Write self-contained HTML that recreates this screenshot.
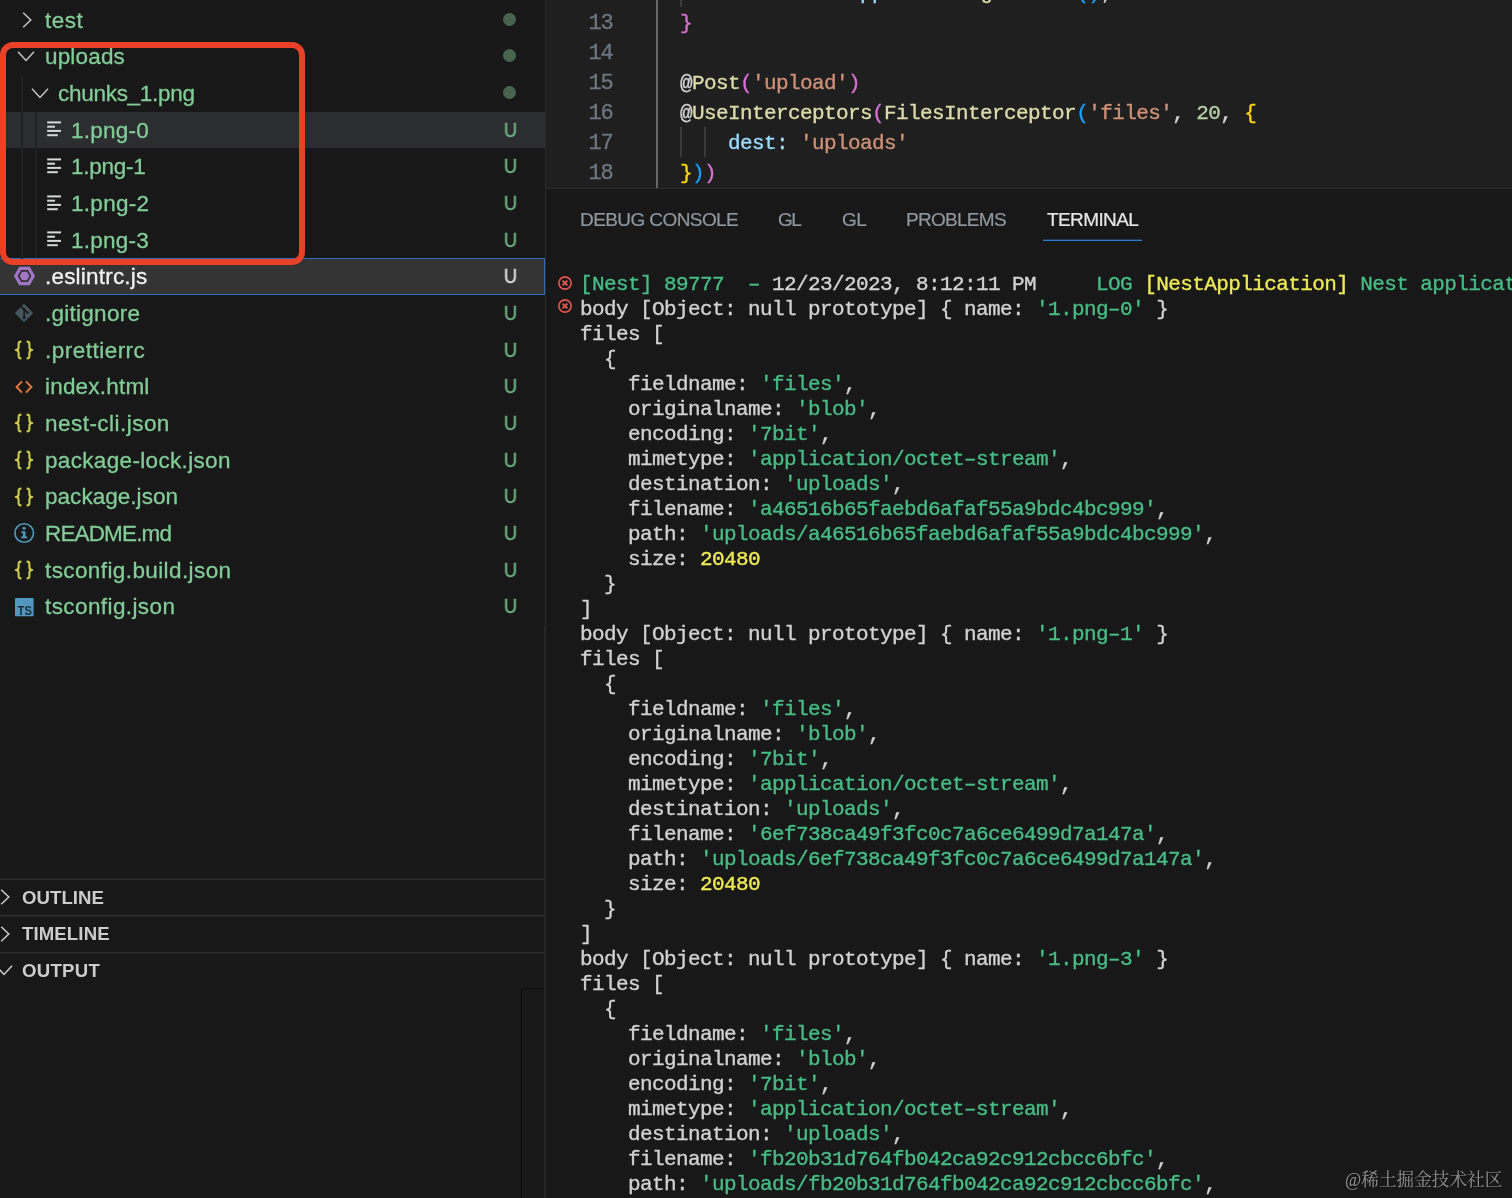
<!DOCTYPE html>
<html><head><meta charset="utf-8"><title>vscode</title>
<style>
html,body{margin:0;padding:0;background:#181818;}
body{width:1512px;height:1198px;position:relative;overflow:hidden;font-family:"Liberation Sans",sans-serif;}
.abs{position:absolute}
#sidebar{position:absolute;left:0;top:0;width:545px;height:1198px;background:#181818;overflow:hidden}
#sbborder{position:absolute;left:545px;top:0;width:1px;height:1198px;background:#2b2b2b}
.row{position:absolute;left:0;width:545px;height:36.667px}
.row.hov{background:#2b2d2f}
.row.sel{left:-4px;width:549px;background:#343434;box-shadow:inset 0 0 0 1px #2a6dc0}
.ic{position:absolute;overflow:visible}
.lbl{position:absolute;font-size:22.5px;line-height:36.667px;height:36.667px;white-space:pre;margin-top:1.0px;-webkit-text-stroke:0.3px currentColor;will-change:transform}
.ubadge{position:absolute;left:503.2px;width:15px;text-align:center;font-size:20px;line-height:36.667px;height:36.667px;margin-top:0.3px;-webkit-text-stroke:0.5px currentColor;transform:scaleX(.9)}
.dot{position:absolute;left:503.1px;width:13px;height:13px;border-radius:50%;background:#48644f}
.guide{position:absolute;width:2px;background:#212121}
#redbox{position:absolute;left:-0.5px;top:41.8px;width:293.2px;height:211px;border:6.2px solid #e84127;border-radius:13px}
.hline{position:absolute;left:0;width:545px;height:1px;background:#2d2d2d}
.hdr{position:absolute;font-weight:700;font-size:18.6px;color:#cccccc;line-height:22px;white-space:pre}
#outrect{position:absolute;left:521px;top:988px;width:24px;height:220px;border-left:1.2px solid #0b0b10;border-top:1.2px solid #0b0b10}
#editor{position:absolute;left:546px;top:0;width:966px;height:188px;background:#1f1f1f;overflow:hidden}
.ln,.cl,.tl{font-family:"Liberation Mono",monospace;white-space:pre;position:absolute;will-change:transform;-webkit-text-stroke:0.35px currentColor}
.tab,.hdr,.ubadge{will-change:transform}
.ln{left:0;width:66.4px;text-align:right;color:#6e7681;font-size:22px;letter-spacing:-1.2px;line-height:30px;height:30px;margin-top:2.0px}
.cl{left:110.2px;color:#d4d4d4;font-size:21px;letter-spacing:-0.6px;line-height:30px;height:30px;margin-top:1.9px}
.eg{position:absolute;width:2px}
#panel{position:absolute;left:546px;top:188px;width:966px;height:1010px;background:#181818;border-top:1.4px solid #2b2b2b;overflow:hidden}
.tab{position:absolute;top:208.9px;font-size:19px;line-height:22px;color:#8f979f;white-space:pre;-webkit-text-stroke:0.2px currentColor}
.tl{left:580px;color:#d2d2d2;font-size:21px;letter-spacing:-0.6px;line-height:25px;height:25px}
</style></head><body>
<div id="sidebar">
<div class="row" style="top:1.50px"></div>
<svg class="ic" style="left:18.6px;top:10.2335px" width="16" height="20" viewBox="0 0 16 20"><polyline points="4.2,2.8 11.8,10 4.2,17.2" fill="none" stroke="#c5c5c5" stroke-width="1.5"/></svg>
<span class="lbl" style="left:45.0px;top:1.50px;color:#82cc98;letter-spacing:0.5px">test</span>
<div class="dot" style="top:12.73px"></div>
<div class="row" style="top:38.17px"></div>
<svg class="ic" style="left:16.3px;top:48.3005px" width="20" height="16" viewBox="0 0 20 16"><polyline points="2,3.8 10,12.4 18,3.8" fill="none" stroke="#c5c5c5" stroke-width="1.5"/></svg>
<span class="lbl" style="left:44.6px;top:38.17px;color:#82cc98;letter-spacing:0.166px">uploads</span>
<div class="dot" style="top:49.40px"></div>
<div class="row" style="top:74.83px"></div>
<svg class="ic" style="left:29.6px;top:85.3675px" width="20" height="16" viewBox="0 0 20 16"><polyline points="2,3.8 10,12.4 18,3.8" fill="none" stroke="#c5c5c5" stroke-width="1.5"/></svg>
<span class="lbl" style="left:57.6px;top:74.83px;color:#82cc98;letter-spacing:-0.28px">chunks_1.png</span>
<div class="dot" style="top:86.07px"></div>
<div class="row hov" style="top:111.50px"></div>
<svg class="ic" style="left:47.2px;top:120.2345px" width="16" height="18" viewBox="0 0 16 18"><g stroke="#d6d9d8" stroke-width="2"><line x1="0.2" y1="2.4" x2="14" y2="2.4"/><line x1="0.2" y1="6.7" x2="8" y2="6.7"/><line x1="0.2" y1="10.9" x2="14" y2="10.9"/><line x1="0.2" y1="15.2" x2="10.8" y2="15.2"/></g></svg>
<span class="lbl" style="left:71.3px;top:111.50px;color:#82cc98;letter-spacing:0.25px">1.png-0</span>
<span class="ubadge" style="top:111.50px;color:#6db082">U</span>
<div class="row" style="top:148.17px"></div>
<svg class="ic" style="left:47.2px;top:156.90150000000003px" width="16" height="18" viewBox="0 0 16 18"><g stroke="#d6d9d8" stroke-width="2"><line x1="0.2" y1="2.4" x2="14" y2="2.4"/><line x1="0.2" y1="6.7" x2="8" y2="6.7"/><line x1="0.2" y1="10.9" x2="14" y2="10.9"/><line x1="0.2" y1="15.2" x2="10.8" y2="15.2"/></g></svg>
<span class="lbl" style="left:71.3px;top:148.17px;color:#82cc98;letter-spacing:-0.267px">1.png-1</span>
<span class="ubadge" style="top:148.17px;color:#6db082">U</span>
<div class="row" style="top:184.84px"></div>
<svg class="ic" style="left:47.2px;top:193.5685px" width="16" height="18" viewBox="0 0 16 18"><g stroke="#d6d9d8" stroke-width="2"><line x1="0.2" y1="2.4" x2="14" y2="2.4"/><line x1="0.2" y1="6.7" x2="8" y2="6.7"/><line x1="0.2" y1="10.9" x2="14" y2="10.9"/><line x1="0.2" y1="15.2" x2="10.8" y2="15.2"/></g></svg>
<span class="lbl" style="left:71.3px;top:184.84px;color:#82cc98;letter-spacing:0.285px">1.png-2</span>
<span class="ubadge" style="top:184.84px;color:#6db082">U</span>
<div class="row" style="top:221.50px"></div>
<svg class="ic" style="left:47.2px;top:230.23550000000003px" width="16" height="18" viewBox="0 0 16 18"><g stroke="#d6d9d8" stroke-width="2"><line x1="0.2" y1="2.4" x2="14" y2="2.4"/><line x1="0.2" y1="6.7" x2="8" y2="6.7"/><line x1="0.2" y1="10.9" x2="14" y2="10.9"/><line x1="0.2" y1="15.2" x2="10.8" y2="15.2"/></g></svg>
<span class="lbl" style="left:71.3px;top:221.50px;color:#82cc98;letter-spacing:0.25px">1.png-3</span>
<span class="ubadge" style="top:221.50px;color:#6db082">U</span>
<div class="row sel" style="top:258.17px"></div>
<svg class="ic" style="left:12px;top:264.0025px" width="25" height="24" viewBox="0 0 25 24"><polygon points="1.9,12 7.2,2.7 17.8,2.7 23.1,12 17.8,21.3 7.2,21.3" fill="#a276c6"/><polygon points="6.6,12 9.55,6.9 15.45,6.9 18.4,12 15.45,17.1 9.55,17.1" fill="none" stroke="#333333" stroke-width="1.8"/></svg>
<span class="lbl" style="left:44.9px;top:258.17px;color:#f2f2f2;letter-spacing:0.202px">.eslintrc.js</span>
<span class="ubadge" style="top:258.17px;color:#dddddd">U</span>
<div class="row" style="top:294.84px"></div>
<svg class="ic" style="left:13px;top:301.8695px" width="22" height="22" viewBox="0 0 22 22"><rect x="4.4" y="4.4" width="13.2" height="13.2" rx="1.2" transform="rotate(45 11 11)" fill="#44555f"/><g stroke="#181818" stroke-width="1.5" fill="none"><line x1="11.2" y1="6.5" x2="11.2" y2="15.5"/><line x1="8" y1="4.6" x2="14.3" y2="10.5"/></g><circle cx="11.2" cy="15.6" r="1.5" fill="#181818"/><circle cx="14.3" cy="10.7" r="1.4" fill="#181818"/><circle cx="11.2" cy="7.6" r="1.4" fill="#181818"/></svg>
<span class="lbl" style="left:44.9px;top:294.84px;color:#82cc98;letter-spacing:0.266px">.gitignore</span>
<span class="ubadge" style="top:294.84px;color:#6db082">U</span>
<div class="row" style="top:331.50px"></div>
<svg class="ic" style="left:13px;top:339.13650000000007px" width="22" height="22" viewBox="0 0 22 22"><g fill="none" stroke="#cfcd4c" stroke-width="2.1" stroke-linejoin="round" stroke-linecap="butt"><path d="M8.4,2.6 C5.6,2.6 5.6,3.6 5.6,6 L5.6,8.2 C5.6,10 4.6,11 2.8,11 C4.6,11 5.6,12 5.6,13.8 L5.6,16 C5.6,18.4 5.6,19.4 8.4,19.4"/><path d="M13.6,2.6 C16.4,2.6 16.4,3.6 16.4,6 L16.4,8.2 C16.4,10 17.4,11 19.2,11 C17.4,11 16.4,12 16.4,13.8 L16.4,16 C16.4,18.4 16.4,19.4 13.6,19.4"/></g></svg>
<span class="lbl" style="left:44.9px;top:331.50px;color:#82cc98;letter-spacing:0.48px">.prettierrc</span>
<span class="ubadge" style="top:331.50px;color:#6db082">U</span>
<div class="row" style="top:368.17px"></div>
<svg class="ic" style="left:13px;top:375.80350000000004px" width="22" height="22" viewBox="0 0 22 22"><g fill="none" stroke="#e07a3c" stroke-width="2"><polyline points="9,5.4 3.6,11 9,16.6"/><polyline points="13,5.4 18.4,11 13,16.6"/></g></svg>
<span class="lbl" style="left:44.9px;top:368.17px;color:#82cc98;letter-spacing:0.198px">index.html</span>
<span class="ubadge" style="top:368.17px;color:#6db082">U</span>
<div class="row" style="top:404.84px"></div>
<svg class="ic" style="left:13px;top:412.4705px" width="22" height="22" viewBox="0 0 22 22"><g fill="none" stroke="#cfcd4c" stroke-width="2.1" stroke-linejoin="round" stroke-linecap="butt"><path d="M8.4,2.6 C5.6,2.6 5.6,3.6 5.6,6 L5.6,8.2 C5.6,10 4.6,11 2.8,11 C4.6,11 5.6,12 5.6,13.8 L5.6,16 C5.6,18.4 5.6,19.4 8.4,19.4"/><path d="M13.6,2.6 C16.4,2.6 16.4,3.6 16.4,6 L16.4,8.2 C16.4,10 17.4,11 19.2,11 C17.4,11 16.4,12 16.4,13.8 L16.4,16 C16.4,18.4 16.4,19.4 13.6,19.4"/></g></svg>
<span class="lbl" style="left:44.9px;top:404.84px;color:#82cc98;letter-spacing:0.466px">nest-cli.json</span>
<span class="ubadge" style="top:404.84px;color:#6db082">U</span>
<div class="row" style="top:441.50px"></div>
<svg class="ic" style="left:13px;top:449.13750000000005px" width="22" height="22" viewBox="0 0 22 22"><g fill="none" stroke="#cfcd4c" stroke-width="2.1" stroke-linejoin="round" stroke-linecap="butt"><path d="M8.4,2.6 C5.6,2.6 5.6,3.6 5.6,6 L5.6,8.2 C5.6,10 4.6,11 2.8,11 C4.6,11 5.6,12 5.6,13.8 L5.6,16 C5.6,18.4 5.6,19.4 8.4,19.4"/><path d="M13.6,2.6 C16.4,2.6 16.4,3.6 16.4,6 L16.4,8.2 C16.4,10 17.4,11 19.2,11 C17.4,11 16.4,12 16.4,13.8 L16.4,16 C16.4,18.4 16.4,19.4 13.6,19.4"/></g></svg>
<span class="lbl" style="left:44.9px;top:441.50px;color:#82cc98;letter-spacing:0.332px">package-lock.json</span>
<span class="ubadge" style="top:441.50px;color:#6db082">U</span>
<div class="row" style="top:478.17px"></div>
<svg class="ic" style="left:13px;top:485.8045000000001px" width="22" height="22" viewBox="0 0 22 22"><g fill="none" stroke="#cfcd4c" stroke-width="2.1" stroke-linejoin="round" stroke-linecap="butt"><path d="M8.4,2.6 C5.6,2.6 5.6,3.6 5.6,6 L5.6,8.2 C5.6,10 4.6,11 2.8,11 C4.6,11 5.6,12 5.6,13.8 L5.6,16 C5.6,18.4 5.6,19.4 8.4,19.4"/><path d="M13.6,2.6 C16.4,2.6 16.4,3.6 16.4,6 L16.4,8.2 C16.4,10 17.4,11 19.2,11 C17.4,11 16.4,12 16.4,13.8 L16.4,16 C16.4,18.4 16.4,19.4 13.6,19.4"/></g></svg>
<span class="lbl" style="left:44.9px;top:478.17px;color:#82cc98;letter-spacing:0.035px">package.json</span>
<span class="ubadge" style="top:478.17px;color:#6db082">U</span>
<div class="row" style="top:514.84px"></div>
<svg class="ic" style="left:12px;top:520.6714999999999px" width="24" height="24" viewBox="0 0 24 24"><circle cx="12.2" cy="12" r="9.3" fill="none" stroke="#5199bd" stroke-width="1.6"/><g fill="#5199bd"><circle cx="12.1" cy="7.3" r="1.55"/><path d="M9.3,10.2 H13.5 V15.6 H15.2 V17.3 H9.2 V15.6 H10.9 V11.9 H9.3 Z"/></g></svg>
<span class="lbl" style="left:44.9px;top:514.84px;color:#82cc98;letter-spacing:-0.85px">README.md</span>
<span class="ubadge" style="top:514.84px;color:#6db082">U</span>
<div class="row" style="top:551.50px"></div>
<svg class="ic" style="left:13px;top:559.1384999999999px" width="22" height="22" viewBox="0 0 22 22"><g fill="none" stroke="#cfcd4c" stroke-width="2.1" stroke-linejoin="round" stroke-linecap="butt"><path d="M8.4,2.6 C5.6,2.6 5.6,3.6 5.6,6 L5.6,8.2 C5.6,10 4.6,11 2.8,11 C4.6,11 5.6,12 5.6,13.8 L5.6,16 C5.6,18.4 5.6,19.4 8.4,19.4"/><path d="M13.6,2.6 C16.4,2.6 16.4,3.6 16.4,6 L16.4,8.2 C16.4,10 17.4,11 19.2,11 C17.4,11 16.4,12 16.4,13.8 L16.4,16 C16.4,18.4 16.4,19.4 13.6,19.4"/></g></svg>
<span class="lbl" style="left:44.9px;top:551.50px;color:#82cc98;letter-spacing:0.4px">tsconfig.build.json</span>
<span class="ubadge" style="top:551.50px;color:#6db082">U</span>
<div class="row" style="top:588.17px"></div>
<svg class="ic" style="left:13px;top:595.6055px" width="22" height="22" viewBox="0 0 22 22"><rect x="2" y="2" width="18.6" height="18.2" rx="0.8" fill="#5297bf"/><text x="4.6" y="18.8" font-family="Liberation Sans, sans-serif" font-weight="700" font-size="12.4" fill="#1b2a33" textLength="14.4" lengthAdjust="spacingAndGlyphs">TS</text></svg>
<span class="lbl" style="left:44.9px;top:588.17px;color:#82cc98;letter-spacing:0.408px">tsconfig.json</span>
<span class="ubadge" style="top:588.17px;color:#6db082">U</span>
<div class="guide" style="left:21px;top:75px;height:183.5px"></div>
<div class="guide" style="left:35px;top:111.7px;height:146.8px"></div>
<div id="redbox"></div>
<div class="hline" style="top:878px;opacity:.5"></div><div class="hline" style="top:879px"></div>
<div class="hline" style="top:915px"></div><div class="hline" style="top:916px;opacity:.6"></div>
<div class="hline" style="top:952px"></div><div class="hline" style="top:953px;opacity:.5"></div>
<svg class="ic" style="left:-3.0999999999999996px;top:887.2px" width="16" height="20" viewBox="0 0 16 20"><polyline points="4.2,2.8 11.8,10 4.2,17.2" fill="none" stroke="#cccccc" stroke-width="1.5"/></svg>
<svg class="ic" style="left:-3.0999999999999996px;top:924px" width="16" height="20" viewBox="0 0 16 20"><polyline points="4.2,2.8 11.8,10 4.2,17.2" fill="none" stroke="#cccccc" stroke-width="1.5"/></svg>
<svg class="ic" style="left:-5.8px;top:962.4px" width="20" height="16" viewBox="0 0 20 16"><polyline points="2,3.8 10,12.4 18,3.8" fill="none" stroke="#cccccc" stroke-width="1.5"/></svg>
<span class="hdr" style="left:22.48px;letter-spacing:0.050px;top:886.6px">OUTLINE</span>
<span class="hdr" style="left:22.48px;letter-spacing:0.115px;top:923.4px">TIMELINE</span>
<span class="hdr" style="left:22.48px;letter-spacing:0.260px;top:959.6px">OUTPUT</span>
<div id="outrect"></div>
</div>
<div id="sbborder"></div><div class="abs" style="left:544px;top:625px;width:1px;height:573px;background:#242424"></div>
<div id="editor">
<div class="eg" style="left:110px;top:0;height:188px;background:#686868"></div>
<div class="eg" style="left:134px;top:0;height:7px;background:#3b3b3b"></div>
<div class="eg" style="left:134px;top:127px;height:30px;background:#3b3b3b"></div>
<div class="eg" style="left:158px;top:127px;height:30px;background:#3b3b3b"></div>
<div class="ln" style="top:-23px">12</div>
<div class="cl" style="top:-23px">    <span style="color:#c586c0">return</span> <span style="color:#569cd6">this</span><span style="color:#d4d4d4">.</span><span style="color:#9cdcfe">appService</span><span style="color:#d4d4d4">.</span><span style="color:#dcdcaa">getHello</span><span style="color:#179fff">()</span><span style="color:#d4d4d4">;</span></div>
<div class="ln" style="top:7px">13</div>
<div class="cl" style="top:7px">  <span style="color:#da70d6">}</span></div>
<div class="ln" style="top:37px">14</div>
<div class="cl" style="top:37px"></div>
<div class="ln" style="top:67px">15</div>
<div class="cl" style="top:67px">  <span style="color:#d4d4d4">@</span><span style="color:#dcdcaa">Post</span><span style="color:#da70d6">(</span><span style="color:#ce9178">'upload'</span><span style="color:#da70d6">)</span></div>
<div class="ln" style="top:97px">16</div>
<div class="cl" style="top:97px">  <span style="color:#d4d4d4">@</span><span style="color:#dcdcaa">UseInterceptors</span><span style="color:#da70d6">(</span><span style="color:#dcdcaa">FilesInterceptor</span><span style="color:#179fff">(</span><span style="color:#ce9178">'files'</span><span style="color:#d4d4d4">, </span><span style="color:#b5cea8">20</span><span style="color:#d4d4d4">, </span><span style="color:#ffd700">{</span></div>
<div class="ln" style="top:127px">17</div>
<div class="cl" style="top:127px">      <span style="color:#9cdcfe">dest:</span> <span style="color:#ce9178">'uploads'</span></div>
<div class="ln" style="top:157px">18</div>
<div class="cl" style="top:157px">  <span style="color:#ffd700">}</span><span style="color:#179fff">)</span><span style="color:#da70d6">)</span></div>
</div>
<div id="panel"></div>
<span class="tab" style="left:580.16px;letter-spacing:-0.583px;">DEBUG CONSOLE</span>
<span class="tab" style="left:777.84px;letter-spacing:-1.600px;">GL</span>
<span class="tab" style="left:842.08px;letter-spacing:-0.600px;">GL</span>
<span class="tab" style="left:906.08px;letter-spacing:-0.714px;">PROBLEMS</span>
<span class="tab" style="left:1046.76px;letter-spacing:-0.599px;color:#e7e7e7">TERMINAL</span>
<div class="abs" style="left:1043px;top:239px;width:99px;height:1px;background:#2f7dd2;opacity:.35"></div><div class="abs" style="left:1043px;top:240px;width:99px;height:1px;background:#2f7dd2"></div>
<svg class="ic" style="left:555.7px;top:273.7px" width="18" height="18" viewBox="0 0 18 18"><circle cx="9" cy="9" r="6.15" fill="none" stroke="#e2574f" stroke-width="1.6"/><path d="M6.6,6.6 L11.4,11.4 M11.4,6.6 L6.6,11.4" stroke="#e2574f" stroke-width="2" fill="none"/></svg>
<svg class="ic" style="left:555.7px;top:296.7px" width="18" height="18" viewBox="0 0 18 18"><circle cx="9" cy="9" r="6.15" fill="none" stroke="#e2574f" stroke-width="1.6"/><path d="M6.6,6.6 L11.4,11.4 M11.4,6.6 L6.6,11.4" stroke="#e2574f" stroke-width="2" fill="none"/></svg>
<div class="tl" style="top:271.5px"><span style="color:#47bd86">[Nest] 89777  – </span>12/23/2023, 8:12:11 PM     <span style="color:#47bd86">LOG</span> <span style="color:#eeeb54">[NestApplication]</span> <span style="color:#47bd86">Nest application successfully started</span></div>
<div class="tl" style="top:296.5px">body [Object: null prototype] { name: <span style="color:#47bd86">'1.png–0'</span> }</div>
<div class="tl" style="top:321.5px">files [</div>
<div class="tl" style="top:346.5px">  {</div>
<div class="tl" style="top:371.5px">    fieldname: <span style="color:#47bd86">'files'</span>,</div>
<div class="tl" style="top:396.5px">    originalname: <span style="color:#47bd86">'blob'</span>,</div>
<div class="tl" style="top:421.5px">    encoding: <span style="color:#47bd86">'7bit'</span>,</div>
<div class="tl" style="top:446.5px">    mimetype: <span style="color:#47bd86">'application/octet–stream'</span>,</div>
<div class="tl" style="top:471.5px">    destination: <span style="color:#47bd86">'uploads'</span>,</div>
<div class="tl" style="top:496.5px">    filename: <span style="color:#47bd86">'a46516b65faebd6afaf55a9bdc4bc999'</span>,</div>
<div class="tl" style="top:521.5px">    path: <span style="color:#47bd86">'uploads/a46516b65faebd6afaf55a9bdc4bc999'</span>,</div>
<div class="tl" style="top:546.5px">    size: <span style="color:#eeeb54">20480</span></div>
<div class="tl" style="top:571.5px">  }</div>
<div class="tl" style="top:596.5px">]</div>
<div class="tl" style="top:621.5px">body [Object: null prototype] { name: <span style="color:#47bd86">'1.png–1'</span> }</div>
<div class="tl" style="top:646.5px">files [</div>
<div class="tl" style="top:671.5px">  {</div>
<div class="tl" style="top:696.5px">    fieldname: <span style="color:#47bd86">'files'</span>,</div>
<div class="tl" style="top:721.5px">    originalname: <span style="color:#47bd86">'blob'</span>,</div>
<div class="tl" style="top:746.5px">    encoding: <span style="color:#47bd86">'7bit'</span>,</div>
<div class="tl" style="top:771.5px">    mimetype: <span style="color:#47bd86">'application/octet–stream'</span>,</div>
<div class="tl" style="top:796.5px">    destination: <span style="color:#47bd86">'uploads'</span>,</div>
<div class="tl" style="top:821.5px">    filename: <span style="color:#47bd86">'6ef738ca49f3fc0c7a6ce6499d7a147a'</span>,</div>
<div class="tl" style="top:846.5px">    path: <span style="color:#47bd86">'uploads/6ef738ca49f3fc0c7a6ce6499d7a147a'</span>,</div>
<div class="tl" style="top:871.5px">    size: <span style="color:#eeeb54">20480</span></div>
<div class="tl" style="top:896.5px">  }</div>
<div class="tl" style="top:921.5px">]</div>
<div class="tl" style="top:946.5px">body [Object: null prototype] { name: <span style="color:#47bd86">'1.png–3'</span> }</div>
<div class="tl" style="top:971.5px">files [</div>
<div class="tl" style="top:996.5px">  {</div>
<div class="tl" style="top:1021.5px">    fieldname: <span style="color:#47bd86">'files'</span>,</div>
<div class="tl" style="top:1046.5px">    originalname: <span style="color:#47bd86">'blob'</span>,</div>
<div class="tl" style="top:1071.5px">    encoding: <span style="color:#47bd86">'7bit'</span>,</div>
<div class="tl" style="top:1096.5px">    mimetype: <span style="color:#47bd86">'application/octet–stream'</span>,</div>
<div class="tl" style="top:1121.5px">    destination: <span style="color:#47bd86">'uploads'</span>,</div>
<div class="tl" style="top:1146.5px">    filename: <span style="color:#47bd86">'fb20b31d764fb042ca92c912cbcc6bfc'</span>,</div>
<div class="tl" style="top:1171.5px">    path: <span style="color:#47bd86">'uploads/fb20b31d764fb042ca92c912cbcc6bfc'</span>,</div>
<div class="tl" style="top:1196.5px">    size: <span style="color:#eeeb54">20480</span></div>
<svg class="ic" style="left:1340px;top:1166px;filter:drop-shadow(1.1px 1.1px 0 rgba(0,0,0,0.6))" width="172" height="32" viewBox="-4 -20.4 172 32"><text x="1" y="0" font-family="'Liberation Serif', 'Noto Serif CJK SC', serif" font-size="17.8" fill="#fff" fill-opacity="0.52" textLength="157.4" lengthAdjust="spacingAndGlyphs">@稀土掘金技术社区</text></svg>
</body></html>
